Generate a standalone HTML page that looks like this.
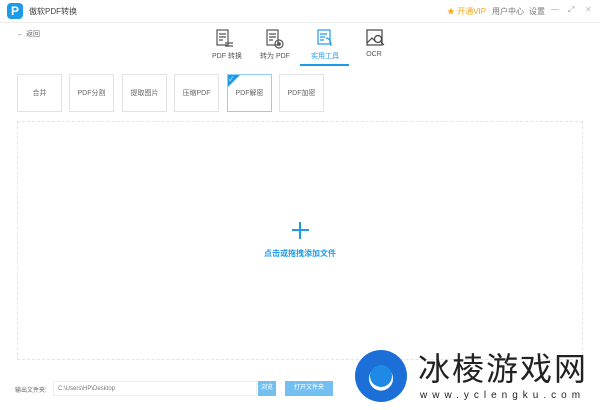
<!DOCTYPE html><html><head><meta charset="utf-8"><style>
body{margin:0;width:600px;height:410px;background:#fff;font-family:"Liberation Sans","Noto Sans CJK SC",sans-serif;position:relative;overflow:hidden;color:#555}
.a{position:absolute}
.box{position:absolute;top:74px;height:38px;border:1px solid #e2e2e2;font-size:7px;color:#666;display:flex;align-items:center;justify-content:center;box-sizing:border-box;width:45px}
.tab{position:absolute;top:51px;font-size:7px;color:#555;text-align:center;width:50px}
</style></head><body>
<div class="a" style="left:7px;top:3px;width:16px;height:16px;background:#1e9be8;border-radius:4px;color:#fff;font-size:12px;font-weight:bold;text-align:center;line-height:16px">P</div>
<div class="a" style="left:29px;top:6px;font-size:8px;color:#444">傲软PDF转换</div>
<div class="a" style="left:447px;top:6px;font-size:8px;color:#f5a623">★ 开通VIP</div>
<div class="a" style="left:492px;top:6px;font-size:8px;color:#777">用户中心</div>
<div class="a" style="left:529px;top:6px;font-size:8px;color:#777">设置</div>
<div class="a" style="left:551px;top:5px;font-size:8px;color:#999">—</div>
<div class="a" style="left:568px;top:5px;font-size:8px;color:#999">⤢</div>
<div class="a" style="left:585px;top:5px;font-size:8px;color:#bbb">✕</div>
<div class="a" style="left:0;top:22px;width:600px;height:1px;background:#eee"></div>
<div class="a" style="left:17px;top:29px;font-size:7px;color:#666">← 返回</div>
<svg class="a" style="left:214px;top:28px" width="180" height="22" fill="none" stroke-width="1.2">
<g stroke="#555"><rect x="3" y="2" width="11" height="15"/><path d="M5 6h7M5 9h7M5 12h4"/><path d="M11 15h8M11 18h8"/></g>
<g stroke="#555" transform="translate(50,0)"><rect x="3" y="2" width="11" height="15"/><path d="M5 6h7M5 9h7M5 12h4"/><circle cx="15" cy="16" r="4"/><circle cx="15" cy="16" r="1.3" fill="#555"/></g>
<g stroke="#1e9be8" transform="translate(101,0)"><rect x="3" y="2" width="12" height="14"/><path d="M5 6h7M5 9h5M5 12h4M11 10c3 0 5 3 5 8"/></g>
<g stroke="#444" transform="translate(151,0)"><rect x="2" y="2" width="15" height="15"/><path d="M2 15l5-5 4 4"/><circle cx="13" cy="11" r="3.5"/><path d="M16 14l3 3"/></g>
</svg>
<div class="tab" style="left:202px">PDF 转换</div>
<div class="tab" style="left:250px">转为 PDF</div>
<div class="tab" style="left:300px;color:#1e9be8">实用工具</div>
<div class="tab" style="left:349px">OCR</div>
<div class="a" style="left:300px;top:64px;width:49px;height:2px;background:#1e9be8"></div>
<div class="box" style="left:17px">合并</div>
<div class="box" style="left:69px">PDF分割</div>
<div class="box" style="left:122px">提取图片</div>
<div class="box" style="left:174px">压缩PDF</div>
<div class="box" style="left:227px;border-color:#8fd0f5">PDF解密</div>
<div class="a" style="left:228px;top:75px;width:0;height:0;border-top:12px solid #1e9be8;border-right:12px solid transparent"></div>
<div class="a" style="left:229px;top:74px;font-size:6px;color:#fff">✓</div>
<div class="box" style="left:279px">PDF加密</div>
<div class="a" style="left:17px;top:121px;width:566px;height:239px;border:1px dashed #e4e4e4;box-sizing:border-box"></div>
<div class="a" style="left:292px;top:229px;width:17px;height:2px;background:#1e9be8"></div>
<div class="a" style="left:299px;top:222px;width:2px;height:17px;background:#1e9be8"></div>
<div class="a" style="left:260px;top:248px;width:80px;text-align:center;font-size:8px;color:#1e9be8;font-weight:bold">点击或拖拽添加文件</div>
<div class="a" style="left:15px;top:385px;font-size:6px;color:#666">输出文件夹:</div>
<div class="a" style="left:53px;top:381px;width:204px;height:15px;border:1px solid #eee;box-sizing:border-box;font-size:6px;color:#777;line-height:14px;padding-left:4px">C:\Users\HP\Desktop</div>
<div class="a" style="left:258px;top:381px;width:18px;height:15px;background:#72bff0;color:#fff;font-size:6px;text-align:center;line-height:15px">浏览</div>
<div class="a" style="left:285px;top:381px;width:48px;height:15px;background:#72bff0;color:#fff;font-size:6px;text-align:center;line-height:15px">打开文件夹</div>
<div class="a" style="left:355px;top:350px;width:52px;height:52px;border-radius:50%;background:radial-gradient(circle at 50% 55%,#fff 0 30%,#1b6fd6 32% 100%)"></div>
<div class="a" style="left:370px;top:365px;width:22px;height:22px;border-radius:50%;background:#1f8ae6"></div>
<div class="a" style="left:418px;top:349px;font-size:32px;color:#222;font-family:'Noto Sans CJK SC',sans-serif;letter-spacing:2px;line-height:36px">冰棱游戏网</div>
<div class="a" style="left:420px;top:390px;font-size:10px;color:#222;letter-spacing:5px">www.yclengku.com</div>
</body></html>
